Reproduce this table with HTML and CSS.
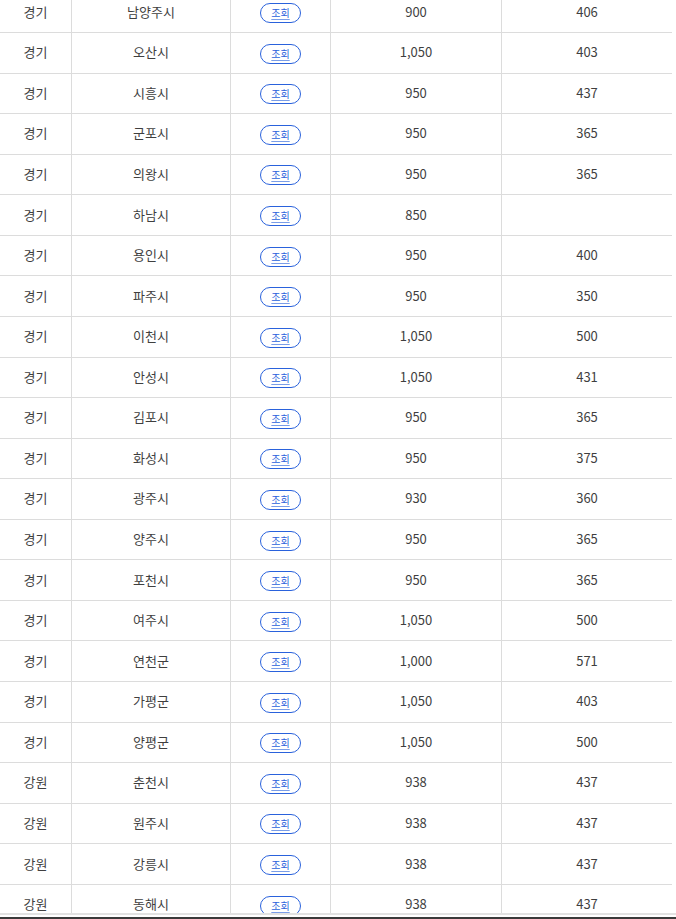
FILE: index.html
```html
<!DOCTYPE html>
<html lang="ko">
<head>
<meta charset="utf-8">
<title>지역별 조회</title>
<link rel="stylesheet" href="styles.css">
</head>
<body>
<div class="table">
  <div class="row"><div class="cell">경기</div><div class="cell">남양주시</div><div class="cell"><a class="btn">조회</a></div><div class="cell">900</div><div class="cell">406</div></div>
  <div class="row"><div class="cell">경기</div><div class="cell">오산시</div><div class="cell"><a class="btn">조회</a></div><div class="cell">1,050</div><div class="cell">403</div></div>
  <div class="row"><div class="cell">경기</div><div class="cell">시흥시</div><div class="cell"><a class="btn">조회</a></div><div class="cell">950</div><div class="cell">437</div></div>
  <div class="row"><div class="cell">경기</div><div class="cell">군포시</div><div class="cell"><a class="btn">조회</a></div><div class="cell">950</div><div class="cell">365</div></div>
  <div class="row"><div class="cell">경기</div><div class="cell">의왕시</div><div class="cell"><a class="btn">조회</a></div><div class="cell">950</div><div class="cell">365</div></div>
  <div class="row"><div class="cell">경기</div><div class="cell">하남시</div><div class="cell"><a class="btn">조회</a></div><div class="cell">850</div><div class="cell"></div></div>
  <div class="row"><div class="cell">경기</div><div class="cell">용인시</div><div class="cell"><a class="btn">조회</a></div><div class="cell">950</div><div class="cell">400</div></div>
  <div class="row"><div class="cell">경기</div><div class="cell">파주시</div><div class="cell"><a class="btn">조회</a></div><div class="cell">950</div><div class="cell">350</div></div>
  <div class="row"><div class="cell">경기</div><div class="cell">이천시</div><div class="cell"><a class="btn">조회</a></div><div class="cell">1,050</div><div class="cell">500</div></div>
  <div class="row"><div class="cell">경기</div><div class="cell">안성시</div><div class="cell"><a class="btn">조회</a></div><div class="cell">1,050</div><div class="cell">431</div></div>
  <div class="row"><div class="cell">경기</div><div class="cell">김포시</div><div class="cell"><a class="btn">조회</a></div><div class="cell">950</div><div class="cell">365</div></div>
  <div class="row"><div class="cell">경기</div><div class="cell">화성시</div><div class="cell"><a class="btn">조회</a></div><div class="cell">950</div><div class="cell">375</div></div>
  <div class="row"><div class="cell">경기</div><div class="cell">광주시</div><div class="cell"><a class="btn">조회</a></div><div class="cell">930</div><div class="cell">360</div></div>
  <div class="row"><div class="cell">경기</div><div class="cell">양주시</div><div class="cell"><a class="btn">조회</a></div><div class="cell">950</div><div class="cell">365</div></div>
  <div class="row"><div class="cell">경기</div><div class="cell">포천시</div><div class="cell"><a class="btn">조회</a></div><div class="cell">950</div><div class="cell">365</div></div>
  <div class="row"><div class="cell">경기</div><div class="cell">여주시</div><div class="cell"><a class="btn">조회</a></div><div class="cell">1,050</div><div class="cell">500</div></div>
  <div class="row"><div class="cell">경기</div><div class="cell">연천군</div><div class="cell"><a class="btn">조회</a></div><div class="cell">1,000</div><div class="cell">571</div></div>
  <div class="row"><div class="cell">경기</div><div class="cell">가평군</div><div class="cell"><a class="btn">조회</a></div><div class="cell">1,050</div><div class="cell">403</div></div>
  <div class="row"><div class="cell">경기</div><div class="cell">양평군</div><div class="cell"><a class="btn">조회</a></div><div class="cell">1,050</div><div class="cell">500</div></div>
  <div class="row"><div class="cell">강원</div><div class="cell">춘천시</div><div class="cell"><a class="btn">조회</a></div><div class="cell">938</div><div class="cell">437</div></div>
  <div class="row"><div class="cell">강원</div><div class="cell">원주시</div><div class="cell"><a class="btn">조회</a></div><div class="cell">938</div><div class="cell">437</div></div>
  <div class="row"><div class="cell">강원</div><div class="cell">강릉시</div><div class="cell"><a class="btn">조회</a></div><div class="cell">938</div><div class="cell">437</div></div>
  <div class="row"><div class="cell">강원</div><div class="cell">동해시</div><div class="cell"><a class="btn">조회</a></div><div class="cell">938</div><div class="cell">437</div></div>
</div>
<div class="bottom-bar"></div>
</body>
</html>
```

FILE: styles.css
```css
html, body {
  margin: 0;
  padding: 0;
  background: #fff;
  overflow: hidden;
  height: 919px;
}
body {
  font-family: "Noto Sans CJK KR", "Noto Sans", sans-serif;
  font-size: 13px;
  color: #3f3f3f;
}
.table {
  width: 672px;
  margin-top: -7.57px;
}
.row {
  display: grid;
  grid-template-columns: 71px 159px 100px 171px 171px;
  height: 40.57px;
  box-sizing: border-box;
  border-bottom: 1px solid #dcdcdc;
}
.cell {
  display: flex;
  align-items: center;
  justify-content: center;
  box-sizing: border-box;
  padding-bottom: 2px;
  border-left: 1px solid #dcdcdc;
  line-height: 1;
}
.cell:first-child {
  border-left: none;
}
.btn {
  display: inline-flex;
  align-items: center;
  justify-content: center;
  width: 41px;
  height: 20px;
  box-sizing: border-box;
  border: 1px solid #2a62dc;
  border-radius: 10px;
  color: #2a62dc;
  font-size: 10px;
  text-decoration: underline;
  text-decoration-thickness: 1px;
  text-decoration-color: #7a9de8;
  text-underline-offset: 2px;
  margin-top: 4px;
}
.bottom-bar {
  position: fixed;
  left: 0;
  right: 0;
  bottom: 0;
  height: 6px;
  box-sizing: border-box;
  background: #fff;
  border-top: 2px solid #e2e2e2;
  border-bottom: 2px solid #3a3a3a;
}
```
